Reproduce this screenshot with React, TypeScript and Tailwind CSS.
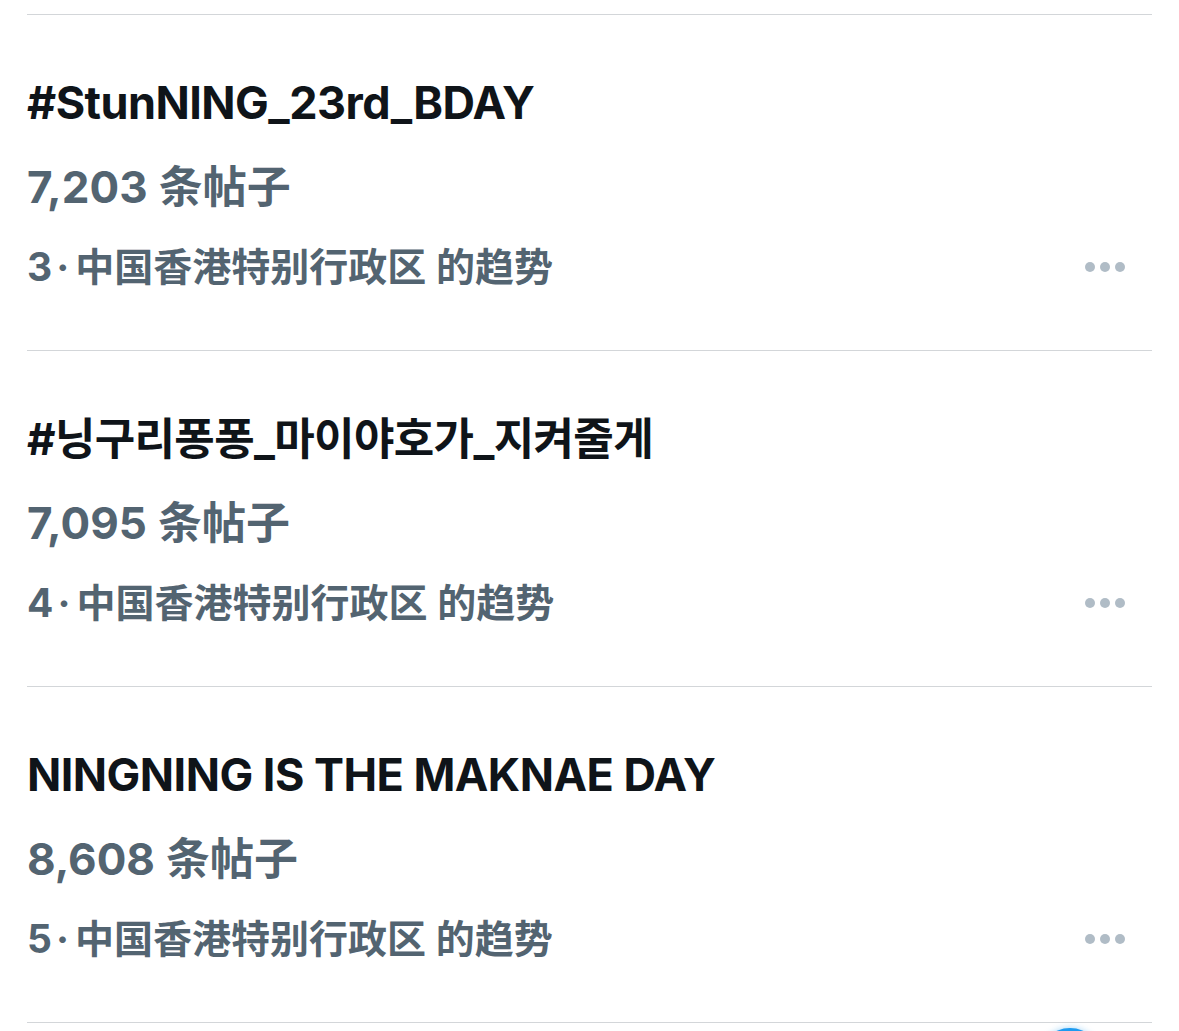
import React from "react";

const latin = '"Inter", "Noto Sans CJK SC", sans-serif';

type Trend = { title: string; count: string; rank: string; kr?: boolean };

const trends: Trend[] = [
  { title: "#StunNING_23rd_BDAY", count: "7,203", rank: "3" },
  { title: "#닝구리퐁퐁_마이야호가_지켜줄게", count: "7,095", rank: "4", kr: true },
  { title: "NINGNING IS THE MAKNAE DAY", count: "8,608", rank: "5" },
];

function Dots() {
  return (
    <div className="flex items-center gap-[5px] pr-[27px]">
      <span className="block h-[10px] w-[10px] rounded-full bg-[#b0bcc6]" />
      <span className="block h-[10px] w-[10px] rounded-full bg-[#b0bcc6]" />
      <span className="block h-[10px] w-[10px] rounded-full bg-[#b0bcc6]" />
    </div>
  );
}

function Item({ t }: { t: Trend }) {
  return (
    <div className="border-t border-[#d3d6d9]">
      <div className="flex flex-col pt-[64px] pb-[61px]">
        {t.kr ? (
          <div
            className="h-[48px] text-[44px] leading-[48px] font-bold tracking-[-0.015em] text-[#0f1419] whitespace-nowrap"
            style={{ fontFamily: '"Inter", "Noto Sans CJK KR", sans-serif' }}
          >
            {t.title}
          </div>
        ) : (
          <div
            className="h-[48px] text-[45px] leading-[48px] font-bold tracking-[-0.012em] text-[#0f1419] whitespace-nowrap"
            style={{ fontFamily: latin }}
          >
            {t.title}
          </div>
        )}
        <div
          className="mt-[36px] h-[48px] text-[44px] leading-[48px] text-[#536471] whitespace-nowrap"
          style={{ fontFamily: latin }}
        >
          <span className="font-bold">{t.count}</span>
          <span className="font-semibold"> 条帖子</span>
        </div>
        <div className="mt-[34px] flex h-[44px] items-center justify-between">
          <div
            className="flex items-baseline text-[39px] leading-[44px] text-[#536471] whitespace-nowrap"
            style={{ fontFamily: latin }}
          >
            <span className="font-bold">{t.rank}</span>
            <span className="ml-[4px] mr-[6px] font-bold">·</span>
            <span className="font-semibold">中国香港特别行政区 的趋势</span>
          </div>
          <Dots />
        </div>
      </div>
    </div>
  );
}

export default function App() {
  return (
    <div className="relative h-[1031px] w-[1179px] overflow-hidden bg-white">
      <div className="px-[27px] pt-[14px]">
        {trends.map((t) => (
          <Item key={t.rank} t={t} />
        ))}
        <div className="border-t border-[#d3d6d9]" />
      </div>
      <div className="absolute left-[1038px] top-[1028px] h-[64px] w-[64px] rounded-full bg-[#1d9bf0] shadow-[0_0_6px_rgba(29,155,240,0.4)]" />
    </div>
  );
}
